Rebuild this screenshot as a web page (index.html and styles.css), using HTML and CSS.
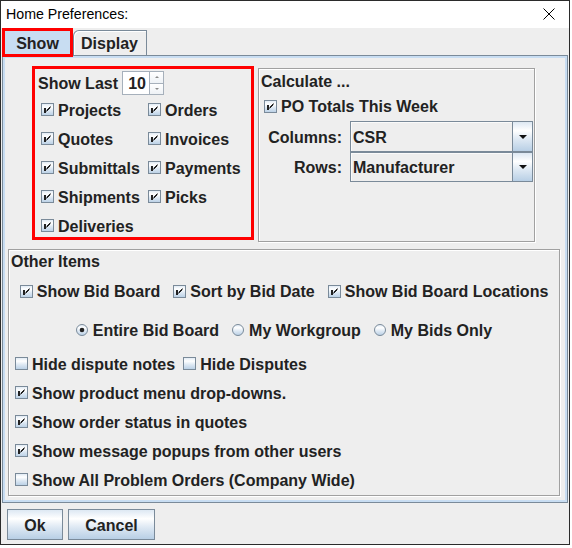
FILE: index.html
```html
<!DOCTYPE html>
<html>
<head>
<meta charset="utf-8">
<title>Home Preferences</title>
<link rel="stylesheet" href="styles.css">
</head>
<body>
<svg class="defs" aria-hidden="true">
  <defs>
    <linearGradient id="grad" x1="0" y1="0" x2="0" y2="1">
      <stop offset="0" stop-color="#dde8f3"/>
      <stop offset="0.3" stop-color="#ffffff"/>
      <stop offset="0.6" stop-color="#dde8f3"/>
      <stop offset="1" stop-color="#b8cfe5"/>
    </linearGradient>
    <symbol id="cb-off" viewBox="0 0 13 13">
      <rect x="0.5" y="0.5" width="12" height="12" fill="url(#grad)" stroke="#7a8a99"/>
    </symbol>
    <symbol id="cb-on" viewBox="0 0 13 13">
      <rect x="0.5" y="0.5" width="12" height="12" fill="url(#grad)" stroke="#7a8a99"/>
      <rect x="3" y="5" width="2" height="5" fill="#222"/>
      <path d="M9.5 3.5L5.5 7.5M9.5 4.5L5.5 8.5" stroke="#222" stroke-width="1"/>
    </symbol>
    <symbol id="rb-on" viewBox="0 0 12 12">
      <circle cx="6" cy="6" r="5.5" fill="url(#grad)" stroke="#7a8a99"/>
      <circle cx="6" cy="6" r="2.3" fill="#222"/>
    </symbol>
    <symbol id="rb-off" viewBox="0 0 12 12">
      <circle cx="6" cy="6" r="5.5" fill="url(#grad)" stroke="#7a8a99"/>
    </symbol>
  </defs>
</svg>

<div class="window">
  <div class="titlebar">
    <span class="title">Home Preferences:</span>
    <svg class="close" viewBox="0 0 12 12" width="12" height="12"><path d="M0.5 0.5L11.5 11.5M11.5 0.5L0.5 11.5" stroke="#000" stroke-width="1"/></svg>
  </div>

  <div class="tabs">
    <div class="tab tab-sel">Show</div>
    <div class="tab tab-disp">Display</div>
  </div>

  <div class="panel">
    <div class="toprow">
      <div class="showgrp">
        <div class="showlast">
          <span class="txt">Show Last</span>
          <div class="spinner">
            <div class="spin-field">10</div>
            <div class="spin-btns">
              <div class="sb sb-up"></div>
              <div class="sb sb-down"></div>
            </div>
          </div>
        </div>
        <div class="cbgrid">
          <div class="cb"><svg class="ico"><use href="#cb-on"/></svg><span>Projects</span></div>
          <div class="cb"><svg class="ico"><use href="#cb-on"/></svg><span>Orders</span></div>
          <div class="cb"><svg class="ico"><use href="#cb-on"/></svg><span>Quotes</span></div>
          <div class="cb"><svg class="ico"><use href="#cb-on"/></svg><span>Invoices</span></div>
          <div class="cb"><svg class="ico"><use href="#cb-on"/></svg><span>Submittals</span></div>
          <div class="cb"><svg class="ico"><use href="#cb-on"/></svg><span>Payments</span></div>
          <div class="cb"><svg class="ico"><use href="#cb-on"/></svg><span>Shipments</span></div>
          <div class="cb"><svg class="ico"><use href="#cb-on"/></svg><span>Picks</span></div>
          <div class="cb"><svg class="ico"><use href="#cb-on"/></svg><span>Deliveries</span></div>
        </div>
      </div>

      <div class="calc etched">
        <div class="gtitle">Calculate ...</div>
        <div class="cb porow"><svg class="ico"><use href="#cb-on"/></svg><span>PO Totals This Week</span></div>
        <div class="combos">
          <span class="clabel">Columns:</span>
          <div class="combo"><span class="combo-text">CSR</span><span class="combo-btn"></span></div>
          <span class="clabel">Rows:</span>
          <div class="combo"><span class="combo-text">Manufacturer</span><span class="combo-btn"></span></div>
        </div>
      </div>
    </div>

    <div class="other etched">
      <div class="gtitle">Other Items</div>
      <div class="row-c r1">
        <div class="cb"><svg class="ico"><use href="#cb-on"/></svg><span>Show Bid Board</span></div>
        <div class="cb"><svg class="ico"><use href="#cb-on"/></svg><span>Sort by Bid Date</span></div>
        <div class="cb"><svg class="ico"><use href="#cb-on"/></svg><span>Show Bid Board Locations</span></div>
      </div>
      <div class="row-c r2">
        <div class="cb"><svg class="rico"><use href="#rb-on"/></svg><span>Entire Bid Board</span></div>
        <div class="cb"><svg class="rico"><use href="#rb-off"/></svg><span>My Workgroup</span></div>
        <div class="cb"><svg class="rico"><use href="#rb-off"/></svg><span>My Bids Only</span></div>
      </div>
      <div class="row-l">
        <div class="cb"><svg class="ico"><use href="#cb-off"/></svg><span>Hide dispute notes</span></div>
        <div class="cb"><svg class="ico"><use href="#cb-off"/></svg><span>Hide Disputes</span></div>
      </div>
      <div class="row-l">
        <div class="cb"><svg class="ico"><use href="#cb-on"/></svg><span>Show product menu drop-downs.</span></div>
      </div>
      <div class="row-l">
        <div class="cb"><svg class="ico"><use href="#cb-on"/></svg><span>Show order status in quotes</span></div>
      </div>
      <div class="row-l">
        <div class="cb"><svg class="ico"><use href="#cb-on"/></svg><span>Show message popups from other users</span></div>
      </div>
      <div class="row-l">
        <div class="cb"><svg class="ico"><use href="#cb-off"/></svg><span>Show All Problem Orders (Company Wide)</span></div>
      </div>
    </div>
  </div>

  <div class="buttons">
    <div class="btn btn-ok">Ok</div>
    <div class="btn btn-cancel">Cancel</div>
  </div>
</div>
</body>
</html>
```

FILE: styles.css
```css
* { box-sizing: border-box; margin: 0; padding: 0; }
html, body { background: #fff; }
body { font-family: "Liberation Sans", Arial, Helvetica, sans-serif; }

.defs { position: absolute; width: 0; height: 0; overflow: hidden; }

.window {
  width: 570px;
  height: 545px;
  border: 1px solid #2b2b2b;
  background: #eeeeee;
  color: #222222;
  font-size: 16px;
  font-weight: bold;
  display: flex;
  flex-direction: column;
}

/* text nudged 1px down to match the Java baseline */
.cb span, .txt { padding-top: 2px; }

/* title bar */
.titlebar {
  flex: none;
  height: 27px;
  background: #fff;
  display: flex;
  align-items: center;
  justify-content: space-between;
  padding: 0 14px 2px 5px;
  color: #000;
  font-weight: normal;
  font-size: 14.2px;
}
.close { display: block; }

/* tabs */
.tabs {
  flex: none;
  height: 27px;
  display: flex;
  align-items: flex-end;
  padding-left: 1px;
}
.tab {
  display: flex;
  align-items: center;
  justify-content: center;
  padding-top: 2px;
}
.tab-sel {
  width: 71px;
  height: 29px;
  margin-bottom: -2px;
  border: 3px solid #ff0000;
  background: #c8ddf2;
  position: relative;
  z-index: 2;
}
.tab-disp {
  width: 74px;
  height: 25px;
  border: 1px solid #7a8a99;
  border-bottom: 0;
  border-top-left-radius: 6px;
  background: #eeeeee;
  box-shadow: inset 1px 1px 0 #fff;
  padding-right: 1px;
}

/* content panel */
.panel {
  flex: none;
  height: 448px;
  margin: 0 1px;
  border: 1px solid #7a8a99;
  box-shadow: inset 0 0 0 2px #c8ddf2;
  padding-top: 12px;
}

.toprow {
  display: flex;
  align-items: flex-start;
  gap: 4px;
  height: 174px;
  margin-left: 29px;
}

.showgrp {
  width: 222px;
  height: 174px;
  margin-top: -2px;
  border: 3px solid #ff0000;
}
.showlast {
  display: flex;
  align-items: center;
  gap: 4px;
  height: 24px;
  margin-top: 2px;
  padding-left: 3px;
}
.spinner {
  display: flex;
  width: 42px;
  height: 24px;
}
.spin-field {
  width: 28px;
  background: #fff;
  border: 1px solid #a6b0bb;
  padding: 2px 3px 0 0;
  display: flex;
  align-items: center;
  justify-content: flex-end;
}
.spin-btns {
  width: 14px;
  display: flex;
  flex-direction: column;
}
.sb {
  flex: 1;
  border: 1px solid #a6b0bb;
  border-left: 0;
  background: linear-gradient(#ffffff, #eef2f6);
  display: flex;
  align-items: center;
  justify-content: center;
}
.sb-down { border-top: 0; }
.sb-up::after {
  content: "";
  border-left: 2px solid transparent;
  border-right: 2px solid transparent;
  border-bottom: 2px solid #8a8a8a;
}
.sb-down::after {
  content: "";
  border-left: 2px solid transparent;
  border-right: 2px solid transparent;
  border-top: 2px solid #8a8a8a;
}

.cbgrid {
  display: grid;
  grid-template-columns: 107px auto;
  grid-auto-rows: 29px;
  padding-left: 6px;
}

.cb {
  display: flex;
  align-items: center;
  gap: 4px;
  white-space: nowrap;
}
.ico { width: 13px; height: 13px; flex: none; }
.rico { width: 12px; height: 12px; flex: none; margin-right: 1px; }

/* etched group borders */
.etched {
  border: 1px solid #a0a0a0;
  box-shadow: 1px 1px 0 #fff, inset 1px 1px 0 #fff;
}

.calc {
  width: 277px;
  height: 174px;
  padding: 1px 0 0 2px;
}
.gtitle {
  height: 22px;
  display: flex;
  align-items: center;
  padding-top: 2px;
}
.porow {
  height: 28px;
  padding-left: 3px;
}
.combos {
  display: grid;
  grid-template-columns: 83px 183px;
  grid-template-rows: 31px 30px;
  column-gap: 8px;
  margin-top: 1px;
  margin-left: -2px;
}
.clabel {
  display: flex;
  align-items: center;
  justify-content: flex-end;
  padding-top: 2px;
}
.combo {
  display: flex;
  border: 1px solid #7a8a99;
  background: #eeeeee;
  box-shadow: inset 1px 1px 0 #fafafa;
}
.combo-text {
  flex: 1;
  padding: 2px 0 0 2px;
  display: flex;
  align-items: center;
}
.combo-btn {
  width: 20px;
  border-left: 1px solid #7a8a99;
  background: linear-gradient(#dde8f3, #ffffff 30%, #dde8f3 60%, #b8cfe5);
  display: flex;
  align-items: center;
  justify-content: center;
}
.combo-btn::after {
  content: "";
  border-left: 4px solid transparent;
  border-right: 4px solid transparent;
  border-top: 4px solid #111;
}

.other {
  width: 552px;
  height: 247px;
  margin: 7px 0 0 5px;
}
.other .gtitle { padding-left: 2px; }
.row-c {
  display: flex;
  justify-content: center;
  align-items: center;
  gap: 13px;
}
.r1 { height: 38px; }
.r2 { height: 39px; }
.row-l {
  height: 29px;
  display: flex;
  align-items: center;
  gap: 8px;
  padding-left: 6px;
}

/* bottom buttons */
.buttons {
  flex: 1;
  display: flex;
  align-items: flex-start;
  gap: 5px;
  padding: 6px 0 0 6px;
}
.btn {
  height: 31px;
  border: 1px solid #7a8a99;
  background: linear-gradient(#dde8f3, #ffffff 30%, #dde8f3 60%, #b8cfe5);
  display: flex;
  align-items: center;
  justify-content: center;
  padding-top: 2px;
}
.btn-ok { width: 56px; }
.btn-cancel { width: 87px; }
```
